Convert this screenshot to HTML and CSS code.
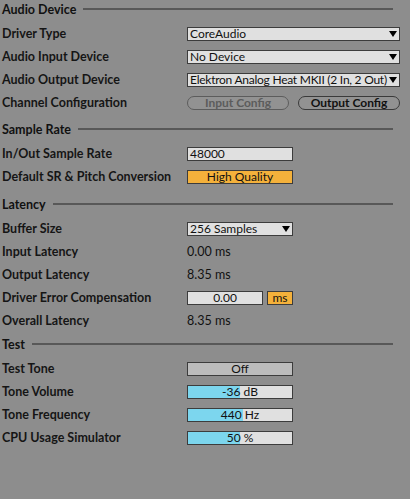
FILE: index.html
```html
<html>
    <head>
        <link rel="stylesheet" href="styles.css">
    </head>
    <body>
      <div class="prefs">

        <div class="section">
            <div class="head"><span>Audio Device</span><div class="rule"></div></div>
            <div class="row">
                <label>Driver Type</label>
                <div class="select wide"><span>CoreAudio</span><i class="arrow"></i></div>
            </div>
            <div class="row">
                <label>Audio Input Device</label>
                <div class="select wide"><span>No Device</span><i class="arrow"></i></div>
            </div>
            <div class="row">
                <label>Audio Output Device</label>
                <div class="select wide"><span class="tight">Elektron Analog Heat MKII (2 In, 2 Out)</span><i class="arrow"></i></div>
            </div>
            <div class="row">
                <label>Channel Configuration</label>
                <div class="pair">
                    <button class="pill off">Input Config</button>
                    <button class="pill">Output Config</button>
                </div>
            </div>
        </div>

        <div class="section s2">
            <div class="head"><span>Sample Rate</span><div class="rule"></div></div>
            <div class="row">
                <label>In/Out Sample Rate</label>
                <div class="field"><span>48000</span></div>
            </div>
            <div class="row">
                <label>Default SR &amp; Pitch Conversion</label>
                <div class="field orange center">High Quality</div>
            </div>
        </div>

        <div class="section s3">
            <div class="head"><span>Latency</span><div class="rule"></div></div>
            <div class="row">
                <label>Buffer Size</label>
                <div class="select"><span>256 Samples</span><i class="arrow"></i></div>
            </div>
            <div class="row">
                <label>Input Latency</label>
                <div class="value">0.00 ms</div>
            </div>
            <div class="row">
                <label>Output Latency</label>
                <div class="value">8.35 ms</div>
            </div>
            <div class="row">
                <label>Driver Error Compensation</label>
                <div class="pair small">
                    <div class="field center comp">0.00</div>
                    <div class="field orange center unit">ms</div>
                </div>
            </div>
            <div class="row">
                <label>Overall Latency</label>
                <div class="value">8.35 ms</div>
            </div>
        </div>

        <div class="section s4">
            <div class="head"><span>Test</span><div class="rule"></div></div>
            <div class="row">
                <label>Test Tone</label>
                <div class="field grey center">Off</div>
            </div>
            <div class="row">
                <label>Tone Volume</label>
                <div class="field slider"><div class="fill" style="width:50%"></div><span>-36 dB</span></div>
            </div>
            <div class="row">
                <label>Tone Frequency</label>
                <div class="field slider"><div class="fill" style="width:53%"></div><span>440 Hz</span></div>
            </div>
            <div class="row">
                <label>CPU Usage Simulator</label>
                <div class="field slider"><div class="fill" style="width:50%"></div><span>50 %</span></div>
            </div>
        </div>

      </div>
    </body>
</html>
```

FILE: styles.css
```css
body{
    margin:0;
    background-color:#8d8d8d;
    font-family:"Lato","DejaVu Sans",sans-serif;
    font-size:12.5px;
    color:#111;
}
.prefs{
    padding:0 0 0 2px;
}
.head{
    display:flex;
    align-items:center;
    height:18px;
    margin-bottom:4px;
    font-weight:bold;
}
.head span{
    margin-right:7px;
}
.rule{
    flex:1;
    height:2px;
    margin-right:17px;
    background-color:#585858;
}
.s2{ margin-top:6px; }
.s3{ margin-top:7px; }
.s4{ margin-top:3px; }

.row{
    display:flex;
    align-items:center;
    height:23px;
}
label{
    flex-shrink:0;
    width:185px;
    font-weight:bold;
    color:#151515;
}

/* dropdowns and boxes */
.select,.field{
    flex-shrink:0;
    box-sizing:border-box;
    height:14px;
    width:106px;
    border:1.5px solid #3c3c3c;
    background-color:#e0e0e0;
    font-size:12px;
    line-height:11px;
    position:relative;
    white-space:nowrap;
}
.select{
    display:flex;
    align-items:center;
    justify-content:space-between;
    padding:0 2px 0 2px;
}
.select span{
    flex:1;
    min-width:0;
}
.select .tight{
    letter-spacing:-0.25px;
}
.select.wide{
    width:213px;
}
.arrow{
    flex-shrink:0;
    width:0;
    height:0;
    border-left:4px solid transparent;
    border-right:4px solid transparent;
    border-top:6px solid #000;
}
.field{
    padding-left:2px;
}
.center{
    text-align:center;
    padding:0;
}
.orange{
    background-color:#f4b13b;
}
.grey{
    background-color:#bcbcbc;
}
.comp{
    width:76px;
}
.unit{
    width:26px;
}
.pair{
    flex-shrink:0;
    display:flex;
    gap:9px;
}
.pair.small{
    gap:4px;
}
.value{
    font-size:12.5px;
}

/* round buttons */
.pill{
    box-sizing:border-box;
    height:14px;
    width:102px;
    border:1.5px solid #3a3a3a;
    border-radius:7px;
    background-color:#929292;
    font-family:inherit;
    font-size:12px;
    font-weight:bold;
    line-height:10px;
    padding:0;
    color:#111;
}
.pill.off{
    color:#5c5c5c;
    border-color:#5c5c5c;
}

/* value sliders */
.slider{
    text-align:center;
    padding:0;
}
.fill{
    position:absolute;
    left:0;
    top:0;
    bottom:0;
    background-color:#7cd6ee;
}
.slider span{
    position:relative;
}
```
